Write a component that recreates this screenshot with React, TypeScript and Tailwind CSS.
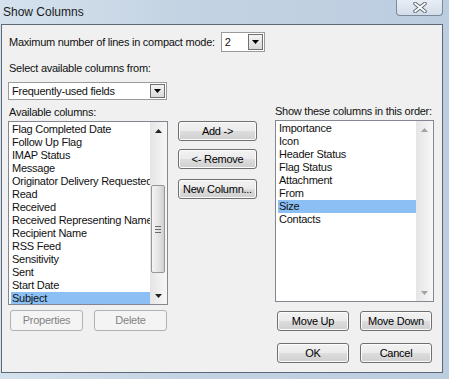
const AVAILABLE = [
  'Flag Completed Date',
  'Follow Up Flag',
  'IMAP Status',
  'Message',
  'Originator Delivery Requested',
  'Read',
  'Received',
  'Received Representing Name',
  'Recipient Name',
  'RSS Feed',
  'Sensitivity',
  'Sent',
  'Start Date',
  'Subject',
];

const SHOWN = ['Importance', 'Icon', 'Header Status', 'Flag Status', 'Attachment', 'From', 'Size', 'Contacts'];

const btn =
  'flex items-center justify-center whitespace-nowrap rounded-[3px] border border-[#707070] bg-[linear-gradient(to_bottom,#f2f2f2_0%,#ebebeb_48%,#dddddd_52%,#cfcfcf_100%)] shadow-[inset_0_0_0_1px_#fbfbfb] text-black';
const btnOff =
  'flex items-center justify-center rounded-[3px] border border-[#adb2b5] bg-[#f4f4f4] text-[#838383]';

function Arrow({ up, grey }: { up?: boolean; grey?: boolean }) {
  return (
    <svg width="7" height="4" viewBox="0 0 7 4">
      <path d={up ? 'M0 4 L3.5 0 L7 4 Z' : 'M0 0 L7 0 L3.5 4 Z'} fill={grey ? '#a3a3a3' : '#222'} />
    </svg>
  );
}

function DropButton() {
  return (
    <div className="flex h-full w-[15px] items-center justify-center border border-[#707070] bg-[linear-gradient(to_bottom,#f4f4f4,#d9d9d9)]">
      <svg width="7" height="4" viewBox="0 0 7 4">
        <path d="M0 0 L7 0 L3.5 4 Z" fill="#000" />
      </svg>
    </div>
  );
}

function Scrollbar({ thumb }: { thumb?: boolean }) {
  return (
    <div className="flex w-[17px] flex-col bg-[linear-gradient(to_right,#e5e5e5,#f7f7f7)]">
      <div className="flex h-[17px] items-center justify-center">
        <Arrow up grey={!thumb} />
      </div>
      <div className="flex-1">
        {thumb && (
          <div className="ml-[1px] mt-[46px] flex h-[88px] w-[14px] flex-col items-center justify-center gap-[2px] rounded-[2px] border border-[#969696] bg-[linear-gradient(to_right,#f4f4f4,#e2e2e2_60%,#cfcfcf)]">
            <div className="h-px w-[6px] bg-[#6a6a6a]" />
            <div className="h-px w-[6px] bg-[#6a6a6a]" />
            <div className="h-px w-[6px] bg-[#6a6a6a]" />
          </div>
        )}
      </div>
      <div className="flex h-[17px] items-center justify-center">
        <Arrow grey={!thumb} />
      </div>
    </div>
  );
}

function ListBox({ items, selected, thumb, className }: { items: string[]; selected: string; thumb?: boolean; className: string }) {
  return (
    <div className={`flex border border-[#828790] bg-white ${className}`}>
      <div className="min-w-0 flex-1 overflow-hidden pl-[2px] pt-[1px]">
        {items.map((it) => (
          <div
            key={it}
            className={`h-[13px] whitespace-nowrap pl-[1px] leading-[13px] ${it === selected ? 'bg-[#8cc0f5]' : ''}`}
          >
            {it}
          </div>
        ))}
      </div>
      <Scrollbar thumb={thumb} />
    </div>
  );
}

export default function App() {
  return (
    <div className="h-[379px] w-[449px] overflow-hidden bg-[linear-gradient(to_right,#d5e2ee,#c4d3e3_40%,#bccde0)] font-['Liberation_Sans',Arial,sans-serif] text-[11px] tracking-[-0.25px] text-[#111]">
      {/* title bar */}
      <div className="flex h-[24px]">
        <div className="pl-[3px] pt-[3px] text-[12px] tracking-normal text-[#1b1b1b]">Show Columns</div>
        <div className="ml-auto mr-[6px] flex h-[16px] w-[47px] items-center justify-center rounded-b-[4px] border border-t-0 border-[#7b8a9b] bg-[linear-gradient(to_bottom,#e8eef5,#d3dde9)]">
          <svg width="14" height="11" viewBox="0 0 14 11">
            <path d="M2 1.5 L12 9.5 M12 1.5 L2 9.5" stroke="#5b6673" strokeWidth="3.6" strokeLinecap="round" />
            <path d="M2 1.5 L12 9.5 M12 1.5 L2 9.5" stroke="#ffffff" strokeWidth="1.8" strokeLinecap="round" />
          </svg>
        </div>
      </div>

      {/* client area */}
      <div className="ml-[1px] h-[349px] w-[442px] border border-[#5c6875] bg-[#f0f0f0] pl-[6px] pt-[7px]">
        <div className="flex h-[20px] items-center">
          <span className="pl-[1px]">Maximum number of lines in compact mode:</span>
          <div className="ml-[6px] flex h-[20px] w-[44px] items-center border border-[#9a9a9a] bg-white py-[1px] pr-[1px]">
            <span className="flex-1 pl-[3px]">2</span>
            <DropButton />
          </div>
        </div>

        <div className="mt-[9px] h-[14px] pl-[1px] leading-[14px]">Select available columns from:</div>

        <div className="mt-[7px] flex h-[18px] w-[159px] items-center border border-[#9a9a9a] bg-white py-[1px] pr-[1px]">
          <span className="flex-1 pl-[3px]">Frequently-used fields</span>
          <DropButton />
        </div>

        <div className="mt-[5px] flex">
          {/* left */}
          <div className="flex w-[160px] flex-col">
            <div className="h-[16px] pl-[1px] leading-[14px]">Available columns:</div>
            <ListBox items={AVAILABLE} selected="Subject" thumb className="h-[184px]" />
            <div className="ml-[2px] mt-[5px] flex gap-[11px]">
              <div className={`${btnOff} h-[21px] w-[73px]`}>Properties</div>
              <div className={`${btnOff} h-[21px] w-[73px]`}>Delete</div>
            </div>
          </div>

          {/* middle */}
          <div className="ml-[10px] flex w-[79px] flex-col pt-[16px]">
            <div className={`${btn} h-[20px]`}>Add -&gt;</div>
            <div className={`${btn} mt-[8px] h-[20px]`}>&lt;- Remove</div>
            <div className={`${btn} mt-[10px] h-[20px]`}>New Column...</div>
          </div>

          {/* right */}
          <div className="ml-[18px] flex w-[159px] flex-col">
            <div className="h-[15px] whitespace-nowrap leading-[13px]">Show these columns in this order:</div>
            <ListBox items={SHOWN} selected="Size" className="h-[182px]" />
            <div className="ml-[2px] mt-[9px] flex gap-[11px]">
              <div className={`${btn} h-[20px] w-[72px]`}>Move Up</div>
              <div className={`${btn} h-[20px] w-[72px]`}>Move Down</div>
            </div>
            <div className="ml-[2px] mt-[12px] flex gap-[11px]">
              <div className={`${btn} h-[20px] w-[72px]`}>OK</div>
              <div className={`${btn} h-[20px] w-[72px]`}>Cancel</div>
            </div>
          </div>
        </div>
      </div>
    </div>
  );
}
